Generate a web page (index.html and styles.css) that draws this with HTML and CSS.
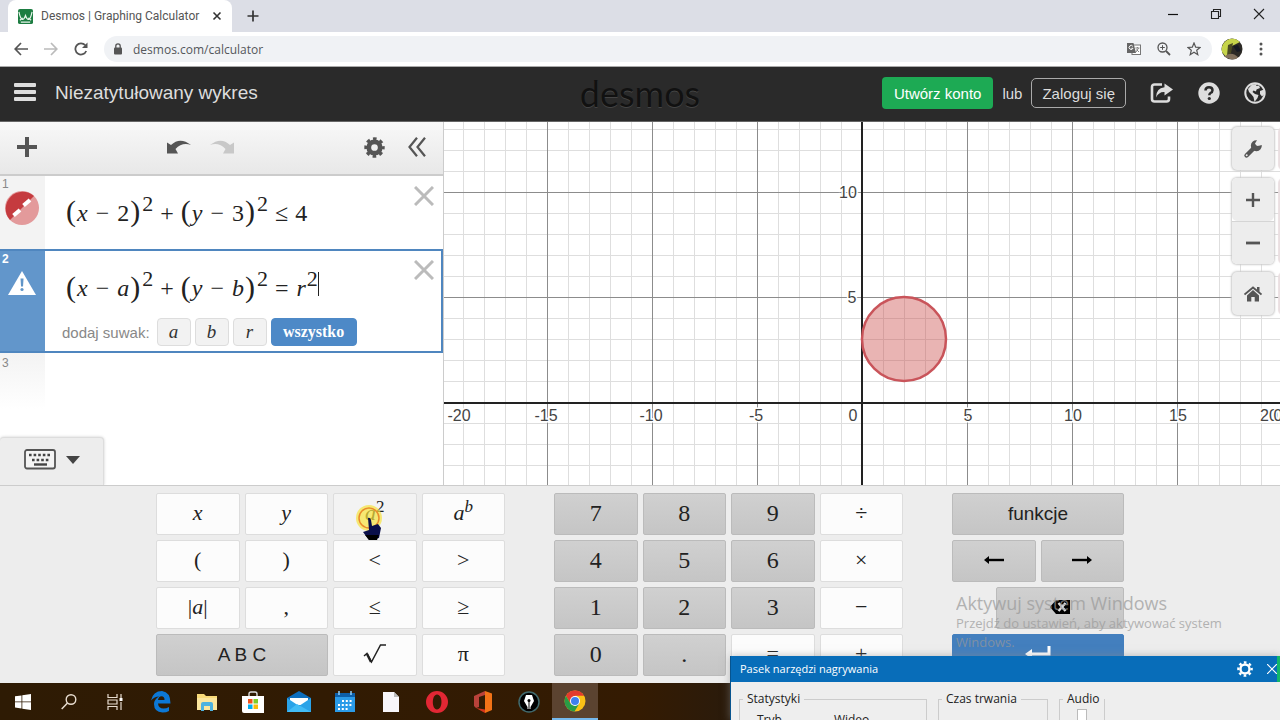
FILE: index.html
```html
<!DOCTYPE html>
<html lang="pl">
<head>
<meta charset="utf-8">
<title>Desmos | Graphing Calculator</title>
<link rel="stylesheet" href="styles.css">
</head>
<body>
<header class="browser">
  <div class="tabstrip">
    <div class="tab">
      <svg class="favicon" viewBox="0 0 16 16"><rect width="16" height="16" rx="2" fill="#1d7d42"/><path d="M1 3C3 13 6 13 8 7C10 13 13 13 15 3M2 12L5 9.500M14 12L11 9.500M3 14H13" fill="none" stroke="#e8f5ec" stroke-width="1.300"/></svg>
      <span class="tab-title">Desmos | Graphing Calculator</span>
      <button class="plain" aria-label="Zamknij kartę"><svg width="10" height="10" viewBox="0 0 10 10"><path d="M1.500 1.500L8.500 8.500M8.500 1.500L1.500 8.500" stroke="#333" stroke-width="1.600"/></svg></button>
    </div>
    <button class="plain newtab" aria-label="Nowa karta"><svg width="12" height="12" viewBox="0 0 12 12"><path d="M6 .5V11.500M.5 6H11.500" stroke="#333" stroke-width="1.700"/></svg></button>
    <div class="window-buttons">
      <button class="plain" aria-label="Minimalizuj"><svg width="12" height="12" viewBox="0 0 12 12"><path d="M1 6.500H11" stroke="#111" stroke-width="1.200"/></svg></button>
      <button class="plain" aria-label="Przywróć"><svg width="12" height="12" viewBox="0 0 12 12"><path d="M1.500 3.500H8.500V10.500H1.500ZM3.500 3V1.500H10.500V8.500H9" fill="none" stroke="#222" stroke-width="1.100"/></svg></button>
      <button class="plain" aria-label="Zamknij"><svg width="12" height="12" viewBox="0 0 12 12"><path d="M1 1L11 11M11 1L1 11" stroke="#222" stroke-width="1.100"/></svg></button>
    </div>
  </div>
  <div class="navbar">
    <button class="plain" aria-label="Wstecz"><svg width="14" height="14" viewBox="0 0 14 14"><path d="M14 7H1.500M7 1L1.200 7L7 13" fill="none" stroke="#555" stroke-width="1.700"/></svg></button>
    <button class="plain" aria-label="Dalej"><svg width="14" height="14" viewBox="0 0 14 14"><path d="M0 7H12.500M7 1L12.800 7L7 13" fill="none" stroke="#bbb" stroke-width="1.700"/></svg></button>
    <button class="plain" aria-label="Odśwież"><svg width="14" height="14" viewBox="0 0 14 14"><path d="M12.200 9A5.600 5.600 0 1 1 11.200 3.200" fill="none" stroke="#555" stroke-width="1.800"/><path d="M13.500 .5V6H8Z" fill="#555"/></svg></button>
    <div class="address">
      <svg width="8" height="12" viewBox="0 0 8 12"><rect y="4.500" width="8" height="7" rx="1" fill="#555"/><path d="M1.800 5V3A2.200 2.200 0 0 1 6.200 3V5" fill="none" stroke="#555" stroke-width="1.300"/></svg>
      <input class="url" type="text" aria-label="Adres" value="desmos.com/calculator">
      <button class="plain" aria-label="Przetłumacz"><svg width="14" height="14" viewBox="0 0 14 14"><rect x="5" y="3" width="8.500" height="9.500" fill="#fff" stroke="#777"/><path d="M0 1H6.500L9 11H0Z" fill="#666"/><path d="M5.800 4.300A2 2 0 1 0 6 6.300H4.300" fill="none" stroke="#fff"/><path d="M8.300 6H12.500M10.400 5V6M11.500 6.200L9 10M9.500 7.500L12 10" stroke="#777" fill="none" stroke-width=".9"/></svg></button>
      <button class="plain" aria-label="Powiększenie"><svg width="14" height="14" viewBox="0 0 14 14"><circle cx="5.500" cy="5.500" r="4.500" fill="none" stroke="#555" stroke-width="1.300"/><path d="M9 9L13 13" stroke="#555" stroke-width="1.800"/><path d="M5.500 3.200V7.800M3.200 5.500H7.800" stroke="#555"/></svg></button>
      <button class="plain" aria-label="Dodaj zakładkę"><svg width="14" height="14" viewBox="0 0 14 14"><path d="M7 1L8.700 5.200L13 5.500L9.700 8.300L10.800 12.700L7 10.300L3.200 12.700L4.300 8.300L1 5.500L5.300 5.200Z" fill="none" stroke="#555" stroke-width="1.200"/></svg></button>
    </div>
    <button class="plain" aria-label="Profil"><svg width="22" height="22" viewBox="0 0 22 22"><defs><clipPath id="avatar"><circle cx="11" cy="11" r="10.500"/></clipPath></defs><g clip-path="url(#avatar)"><rect width="22" height="22" fill="#2c2a26"/><path d="M0 13C1 4 6 0 15 0L19 4L11 8L6 20Z" fill="#c6d44b"/><path d="M7 7L12 5L10 15L6 18Z" fill="#4a4a22"/><path d="M12 8L17 7L20 13L16 14Z" fill="#161a24"/><path d="M3 19Q10 12 18 20L12 22Z" fill="#81705c"/></g></svg></button>
    <button class="plain" aria-label="Menu"><svg width="4" height="14" viewBox="0 0 4 14" fill="#555"><circle cx="2" cy="2" r="1.500"/><circle cx="2" cy="7" r="1.500"/><circle cx="2" cy="12" r="1.500"/></svg></button>
  </div>
</header>

<div class="site-header">
  <button class="plain" aria-label="Otwórz menu"><svg width="22" height="20" viewBox="0 0 22 20" fill="#ddd"><rect width="22" height="4" rx="1"/><rect y="7" width="22" height="4" rx="1"/><rect y="14" width="22" height="4" rx="1"/></svg></button>
  <h1 class="graph-title">Niezatytułowany wykres</h1>
  <div class="logo">desmos</div>
  <div class="account">
    <button class="signup">Utwórz konto</button>
    <span>lub</span>
    <button class="login">Zaloguj się</button>
  </div>
  <div class="header-icons">
    <button class="plain" aria-label="Udostępnij"><svg width="24" height="22" viewBox="0 0 24 22"><path d="M12 2.500H4.500Q2 2.500 2 5V17Q2 19.500 4.500 19.500H16.500Q19 19.500 19 17V14.500" fill="none" stroke="#ddd" stroke-width="2.600"/><path d="M14.500 1.500L23 7.500L14.500 13.500V10Q9 9.500 6 15.500Q6 6 14.500 5.200Z" fill="#ddd"/></svg></button>
    <button class="plain" aria-label="Pomoc"><svg width="22" height="22" viewBox="0 0 22 22"><circle cx="11" cy="11" r="10.700" fill="#ddd"/><path d="M7.500 8.500Q7.500 5.200 11 5.200Q14.500 5.200 14.500 8.200Q14.500 10 12.500 11Q11.300 11.700 11.300 13.300" fill="none" stroke="#2a2a2a" stroke-width="2.500"/><circle cx="11.300" cy="16.500" r="1.600" fill="#2a2a2a"/></svg></button>
    <button class="plain" aria-label="Język"><svg width="22" height="22" viewBox="0 0 22 22"><circle cx="11" cy="11" r="9.700" fill="none" stroke="#ddd" stroke-width="2"/><path d="M4 7L8 2.500L13 2L12 4L15 3.500L16 6L12.500 7.500L12 9.500L9.500 8.500L8.500 10L11 12L14.500 13L13.500 16L10.500 20L9.500 15L7.500 12.500L5 10Z" fill="#ddd"/><path d="M16 9L20 7.500L20.500 12L18 14.500L16 12Z" fill="#ddd"/></svg></button>
  </div>
</div>

<main class="workspace">
  <section class="expressions">
    <div class="list-toolbar">
      <button class="plain" aria-label="Dodaj element"><svg width="20" height="20" viewBox="0 0 20 20"><path d="M10 0V20M0 10H20" stroke="#555" stroke-width="4"/></svg></button>
      <div class="history">
        <button class="plain" aria-label="Cofnij"><svg width="24" height="14" viewBox="0 0 24 14"><path d="M0 2.500L4 5Q13-3.500 24 5Q15 2 8.500 9L11 13.500H0Z" fill="#555"/></svg></button>
        <button class="plain" aria-label="Ponów"><svg width="24" height="14" viewBox="0 0 24 14"><path d="M24 2.500L20 5Q11-3.500 0 5Q9 2 15.500 9L13 13.500H24Z" fill="#c8c8c8"/></svg></button>
      </div>
      <button class="plain" aria-label="Edytuj listę"><svg width="21" height="21" viewBox="0 0 22 22"><circle cx="11" cy="11" r="6" fill="none" stroke="#555" stroke-width="5"/><circle cx="11" cy="11" r="9" fill="none" stroke="#555" stroke-width="3.400" stroke-dasharray="3.700 3.370" stroke-dashoffset="1.850"/></svg></button>
      <button class="plain" aria-label="Ukryj listę"><svg width="18" height="20" viewBox="0 0 18 20"><path d="M9 .8L1.500 10L9 19.200M17 .8L9.500 10L17 19.200" fill="none" stroke="#555" stroke-width="2.200"/></svg></button>
    </div>

    <div class="row">
      <div class="gutter"><span class="num">1</span>
        <svg width="34" height="36" viewBox="0 0 34 36"><circle cx="17" cy="18" r="17" fill="#e39a9b"/><path d="M5 30A17 17 0 0 1 29 6Z" fill="#c53b3f"/><path d="M8.500 25.500L15 20M18.500 15.500L25 10" stroke="#fff" stroke-width="4"/></svg>
      </div>
      <div class="cell">
        <div class="math"><span class="par">(</span><i>x</i><b>−</b><span class="digit">2</span><span class="par">)</span><sup>2</sup><b>+</b><span class="par">(</span><i>y</i><b>−</b><span class="digit">3</span><span class="par">)</span><sup>2</sup><b>≤</b>4</div>
        <button class="plain remove" aria-label="Usuń"><svg width="20" height="20" viewBox="0 0 20 20"><path d="M1 1L19 19M19 1L1 19" stroke="#bbb" stroke-width="3"/></svg></button>
      </div>
    </div>

    <div class="row selected">
      <div class="gutter"><span class="num">2</span>
        <svg width="28" height="24" viewBox="0 0 28 24"><path d="M14 0L28 24H0Z" fill="#fff"/><path d="M12.500 7.500H15.500L15 15.500H13Z" fill="#6095c8"/><circle cx="14" cy="18.500" r="1.600" fill="#6095c8"/></svg>
      </div>
      <div class="cell">
        <div class="math"><span class="par">(</span><i>x</i><b>−</b><i>a</i><span class="par">)</span><sup>2</sup><b>+</b><span class="par">(</span><i>y</i><b>−</b><i>b</i><span class="par">)</span><sup>2</sup><b>=</b><i>r</i><sup class="caret">2</sup></div>
        <div class="sliders"><span>dodaj suwak:</span><button>a</button><button>b</button><button>r</button><button class="all">wszystko</button></div>
        <button class="plain remove" aria-label="Usuń"><svg width="20" height="20" viewBox="0 0 20 20"><path d="M1 1L19 19M19 1L1 19" stroke="#bbb" stroke-width="3"/></svg></button>
      </div>
    </div>

    <div class="row next"><div class="gutter"><span class="num">3</span></div><div class="cell"></div></div>

    <button class="keypad-toggle" aria-label="Ukryj klawiaturę">
      <svg width="32" height="21" viewBox="0 0 32 21"><rect x="1" y="1" width="30" height="18.500" rx="2" fill="#f4f4f4" stroke="#555" stroke-width="1.800"/><path d="M5 6H28M8 11H26" stroke="#444" stroke-width="2.600" stroke-dasharray="2.600 2"/><path d="M10 15.500H23" stroke="#444" stroke-width="2.400"/></svg>
      <svg width="14" height="8" viewBox="0 0 14 8"><path d="M0 0H14L7 8Z" fill="#444"/></svg>
    </button>
  </section>

  <section class="graph">
    <svg class="plot" width="100%" height="100%">
      <defs>
        <pattern id="minor" width="21" height="21" patternUnits="userSpaceOnUse"><path d="M0 .5H21M.5 0V21" stroke="#dedede" fill="none"/></pattern>
        <pattern id="major" width="105" height="105" patternUnits="userSpaceOnUse"><path d="M0 .5H105M.5 0V105" stroke="#8c8c8c" fill="none"/></pattern>
      </defs>
      <svg x="50%" y="280" overflow="visible">
        <rect x="-2100" y="-2100" width="4200" height="4200" fill="url(#minor)"/>
        <rect x="-2100" y="-2100" width="4200" height="4200" fill="url(#major)"/>
        <path d="M-2100 1H2100M0 -2100V2100" stroke="#222" stroke-width="2"/>
        <circle cx="42" cy="-63" r="42" fill="#c74440" fill-opacity=".4" stroke="#c9545a" stroke-width="2.500"/>
        <g class="ticks">
          <text x="-403" y="19">-20</text><text x="-316" y="19">-15</text><text x="-211" y="19">-10</text><text x="-106" y="19">-5</text><text x="-9" y="19">0</text>
          <text x="106" y="19">5</text><text x="211" y="19">10</text><text x="316" y="19">15</text><text x="407" y="19">20</text><text x="416" y="19">0</text>
          <text x="-14" y="-204">10</text><text x="-10" y="-99">5</text>
        </g>
      </svg>
    </svg>
    <div class="graph-controls">
      <button aria-label="Ustawienia wykresu"><svg width="20" height="20" viewBox="0 0 20 20"><path d="M3.500 16.500L12 8" stroke="#555" stroke-width="4.400" stroke-linecap="round"/><path d="M18.800 6A5.500 5.500 0 1 1 14 1.200L12 4.500L13.500 7L16 6.800Z" fill="#555"/><circle cx="3.700" cy="16.300" r="1" fill="#eee"/></svg></button>
      <div class="zoom">
        <button aria-label="Powiększ"><svg width="14" height="14" viewBox="0 0 14 14"><path d="M7 0V14M0 7H14" stroke="#555" stroke-width="2.400"/></svg></button>
        <button aria-label="Pomniejsz"><svg width="14" height="14" viewBox="0 0 14 14"><path d="M0 7H14" stroke="#555" stroke-width="2.800"/></svg></button>
      </div>
      <button aria-label="Widok domyślny"><svg width="18" height="16" viewBox="0 0 18 16"><path d="M.5 8.500L9 1.500L17.500 8.500" fill="none" stroke="#555" stroke-width="1.800"/><path d="M13 1H15.500V6L13 4Z" fill="#555"/><path d="M9 4L15 9.500V15.500H10.700V11H7.300V15.500H3V9.500Z" fill="#555"/></svg></button>
    </div>
  </section>
</main>

<section class="keypad">
  <div class="keys four">
    <button><i>x</i></button><button><i>y</i></button>
    <button class="hover"><span><i>a</i><sup>2</sup></span>
      <svg class="pointer" width="30" height="38" viewBox="0 0 30 38"><circle cx="14" cy="14" r="13" fill="#f7e33c" fill-opacity=".7"/><circle cx="14" cy="14" r="10" fill="none" stroke="#e98b2a" stroke-width="1.500"/><path d="M13 14Q15 13 16 16L17 22L23 20L26 24L24 34L14 36L8 28L14 26Z" fill="#0a0f4a"/><path d="M10 31H24L22 36H14Z" fill="#000"/></svg>
    </button>
    <button><span><i>a</i><sup><i>b</i></sup></span></button>
    <button>(</button><button>)</button><button>&lt;</button><button>&gt;</button>
    <button><span>|<i>a</i>|</span></button><button>,</button><button>≤</button><button>≥</button>
    <button class="dark sans wide">A B C</button><button aria-label="pierwiastek"><svg width="23" height="20" viewBox="0 0 23 20"><path d="M1 12L4 9.500L8.500 18L17.500 1H23" fill="none" stroke="#222" stroke-width="1.500"/><path d="M4 10L8 18" stroke="#222" stroke-width="2.400"/></svg></button><button>π</button>
  </div>
  <div class="keys four">
    <button class="dark">7</button><button class="dark">8</button><button class="dark">9</button><button>÷</button>
    <button class="dark">4</button><button class="dark">5</button><button class="dark">6</button><button>×</button>
    <button class="dark">1</button><button class="dark">2</button><button class="dark">3</button><button>−</button>
    <button class="dark">0</button><button class="dark">.</button><button>=</button><button>+</button>
  </div>
  <div class="keys two">
    <button class="dark sans wide">funkcje</button>
    <button class="dark" aria-label="W lewo"><svg width="20" height="8" viewBox="0 0 20 8"><path d="M0 4L5 0V8Z"/><path d="M4 4H20" stroke="#000" stroke-width="2.400"/></svg></button>
    <button class="dark" aria-label="W prawo"><svg width="20" height="8" viewBox="0 0 20 8"><path d="M20 4L15 0V8Z"/><path d="M0 4H16" stroke="#000" stroke-width="2.400"/></svg></button>
    <button class="dark wide backspace" aria-label="Usuń"><svg width="20" height="14" viewBox="0 0 20 14"><path d="M0 7L6 0H20V14H6Z"/><path d="M8.500 3L15.500 11M15.500 3L8.500 11" stroke="#ddd" stroke-width="2.400"/></svg></button>
    <button class="enter wide" aria-label="Enter"><svg width="26" height="16" viewBox="0 0 26 16"><path d="M24 0V8H5" fill="none" stroke="#fff" stroke-width="3"/><path d="M0 8L7 3V13Z" fill="#fff"/></svg></button>
  </div>
</section>

<nav class="taskbar">
  <button class="plain" aria-label="Start"><svg width="16" height="16" viewBox="0 0 16 16" fill="#fff"><path d="M0 2.300L6.500 1.400V7.500H0ZM7.300 1.300L16 0V7.500H7.300ZM0 8.300H6.500V14.500L0 13.600ZM7.300 8.300H16V16L7.300 14.700Z"/></svg></button>
  <button class="plain" aria-label="Szukaj"><svg width="16" height="16" viewBox="0 0 16 16"><circle cx="10" cy="5.500" r="4.800" fill="none" stroke="#e8ddd0" stroke-width="1.400"/><path d="M6.500 9L.7 15" stroke="#e8ddd0" stroke-width="1.500"/></svg></button>
  <button class="plain" aria-label="Widok zadań"><svg width="16" height="16" viewBox="0 0 16 16"><path d="M1 0V3.500H10V0M1 16V12.500H10V16M1 6H10V10H1ZM14 0V4M14 8V16" fill="none" stroke="#e8ddd0" stroke-width="1.200"/><rect x="12.500" y="4" width="3" height="3" fill="#fff"/></svg></button>
  <button class="plain" aria-label="Edge"><svg width="20" height="22" viewBox="0 0 20 22"><path d="M0 9.500Q2 0 11 0Q19.500 1 19.500 12.500H7Q7.500 17.500 12.500 17.500Q15.500 17.500 18 16V20Q15.500 21.500 11.500 21.500Q3 21 3 13Q3 8.500 8 5.500Q3.500 5.500 0 9.500ZM7 9H13.500Q13.500 5.300 10.500 5.300Q7.500 5.500 7 9Z" fill="#0c78d6"/></svg></button>
  <button class="plain" aria-label="Eksplorator plików"><svg width="22" height="18" viewBox="0 0 22 18"><path d="M1 1H8L10 3H21V17H1Z" fill="#f9da78"/><path d="M1 5H21V17H1Z" fill="#fce69d"/><path d="M5 18V11Q5 9 7 9H15Q17 9 17 11V18H14V13H8V18Z" fill="#4db2df"/></svg></button>
  <button class="plain" aria-label="Sklep"><svg width="22" height="22" viewBox="0 0 22 22"><path d="M7 6V3Q7 1 9 1H13Q15 1 15 3V6" fill="none" stroke="#ddd" stroke-width="1.400"/><path d="M0 5H22V22H2Q0 22 0 20Z" fill="#fff"/><path d="M6 8H10.500V12.500H6Z" fill="#f1511b"/><path d="M11.500 8H16V12.500H11.500Z" fill="#80cc28"/><path d="M6 13.500H10.500V18H6Z" fill="#00adef"/><path d="M11.500 13.500H16V18H11.500Z" fill="#fbbc09"/></svg></button>
  <button class="plain" aria-label="Poczta"><svg width="24" height="22" viewBox="0 0 24 22"><path d="M0 7L12 0L24 7V21H0Z" fill="#0d6ebd"/><path d="M3 7H21V14H3Z" fill="#fff"/><path d="M0 7L12 15L24 7V21H0Z" fill="#2aa3e8"/><path d="M0 21L10 13L24 21Z" fill="#42bcf5"/></svg></button>
  <button class="plain" aria-label="Kalendarz"><svg width="22" height="22" viewBox="0 0 22 22"><path d="M1 2H21V21H1Z" fill="#2b9be8"/><path d="M1 2H21V6H1Z" fill="#0d5fa9"/><path d="M5 0V4M17 0V4" stroke="#8fd0fb" stroke-width="1.500"/><path d="M8 10H19M4 14H19M4 18H15" stroke="#fff" stroke-width="2" stroke-dasharray="2 1.800"/></svg></button>
  <button class="plain" aria-label="Dokument"><svg width="16" height="20" viewBox="0 0 16 20"><path d="M0 0H11L16 5V20H0Z" fill="#f8f6fa"/><path d="M11 0V5H16Z" fill="#bbb"/></svg></button>
  <button class="plain" aria-label="Opera"><svg width="22" height="22" viewBox="0 0 22 22"><path d="M11 0A11 11 0 1 0 11 22A11 11 0 1 0 11 0ZM11 3.500C17 3.500 17 18.500 11 18.500C5.500 18.500 5.500 3.500 11 3.500Z" fill="#e22734" fill-rule="evenodd"/></svg></button>
  <button class="plain" aria-label="Office"><svg width="18" height="22" viewBox="0 0 18 22"><path d="M0 5L11 0V4L5 6V16L2 17L0 15Z" fill="#b9423a"/><path d="M11 0L18 2.500V19L11 22Z" fill="#f27317"/><path d="M2 17L11 18.500V22Z" fill="#d5351b"/></svg></button>
  <button class="plain" aria-label="Pióro"><svg width="22" height="22" viewBox="0 0 22 22"><circle cx="11" cy="11" r="10" fill="#000" stroke="#41696c" stroke-width="1.500"/><path d="M8 4H14L16 10L12.500 16V18H9.500V16L6 10Z" fill="#fff"/><path d="M11 9V18" stroke="#000"/><circle cx="11" cy="9.500" r="1.500"/></svg></button>
  <button class="plain active" aria-label="Chrome"><svg width="22" height="22" viewBox="0 0 22 22"><circle cx="11" cy="11" r="10.500" fill="#fbc116"/><path d="M1.900 5.800A10.500 10.500 0 0 1 20.100 5.800H11L6.500 13.500Z" fill="#e33b2e"/><path d="M1.900 5.800A10.500 10.500 0 0 0 10.500 21.500L15.300 13.500L6.500 13.500Z" fill="#2a9c46"/><circle cx="11" cy="11" r="5" fill="#fff"/><circle cx="11" cy="11" r="4" fill="#3f7fed"/></svg></button>
</nav>

<aside class="watermark"><p class="wm-title">Aktywuj system Windows</p><p>Przejdź do ustawień, aby aktywować system Windows.</p></aside>

<section class="recorder">
  <div class="rec-bar"><span class="rec-title">Pasek narzędzi nagrywania</span>
    <button class="plain" aria-label="Ustawienia"><svg width="16" height="16" viewBox="0 0 16 16"><circle cx="8" cy="8" r="4.500" fill="none" stroke="#fff" stroke-width="2.400"/><circle cx="8" cy="8" r="6.600" fill="none" stroke="#fff" stroke-width="2.400" stroke-dasharray="2.600 2.580" stroke-dashoffset="1.300"/></svg></button>
    <button class="plain" aria-label="Zamknij"><svg width="10" height="10" viewBox="0 0 10 10"><path d="M0 0L10 10M10 0L0 10" stroke="#fff" stroke-width="1.200"/></svg></button>
    <span class="edge"></span>
  </div>
  <div class="rec-body">
    <fieldset class="stats"><legend>Statystyki</legend><span>Tryb</span><span>Wideo</span></fieldset>
    <fieldset class="time"><legend>Czas trwania</legend></fieldset>
    <fieldset class="audio"><legend>Audio</legend><div class="meter"></div></fieldset>
  </div>
</section>
</body>
</html>
```
FILE: styles.css
```css
* { box-sizing: border-box; }
body {
  margin: 0;
  height: 100vh;
  display: flex;
  flex-direction: column;
  overflow: hidden;
  position: relative;
  font-family: "Liberation Sans", Arial, sans-serif;
  background: #fff;
}
button { font: inherit; color: inherit; padding: 0; }
svg { display: block; flex: none; }
.plain { border: 0; background: none; display: flex; align-items: center; justify-content: center; }

/* Browser frame */
.browser { font-family: "Open Sans", "Noto Sans", sans-serif; }
.tabstrip { display: flex; align-items: center; height: 32px; background: #dcdee6; padding-left: 8px; }
.tab { display: flex; align-items: center; gap: 8px; width: 224px; height: 32px; padding: 0 10px; background: #fff; border-radius: 8px 8px 0 0; }
.favicon { width: 15px; height: 15px; }
.tab-title { flex: 1; font: 12px/16px Roboto, sans-serif; color: #555; white-space: nowrap; }
.newtab { margin-left: 15px; }
.window-buttons { margin-left: auto; display: flex; gap: 31px; padding: 0 15px 4px 0; }
.navbar { display: flex; align-items: center; gap: 16px; height: 35px; padding: 0 17px 0 14px; background: #fff; border-bottom: 1px solid #aaa; }
.address { flex: 1; display: flex; align-items: center; gap: 16px; height: 26px; padding: 0 11px 0 10px; border-radius: 13px; background: #f0f2f5; margin-right: -7px; }
.url { flex: 1; min-width: 0; border: 0; padding: 0; margin-left: -5px; background: none; font: 12px "Open Sans", "Noto Sans", sans-serif; color: #54575b; }

/* Site header */
.site-header { display: flex; align-items: center; height: 55px; padding: 0 14px 2px; background: #2a2a2a; color: #ddd; position: relative; border-bottom: 1px solid #666; }
.graph-title { flex: 1; margin: 0 0 0 19px; font-size: 19px; line-height: 24px; font-weight: 400; }
.logo { position: absolute; left: 0; right: 0; text-align: center; font: 36px/50px Lato, sans-serif; color: #111; text-shadow: 0 1px 0 #444; pointer-events: none; }
.account { display: flex; align-items: center; gap: 9px; font-size: 15px; }
.signup { height: 32px; padding: 0 12px; border: 0; border-radius: 4px; background: #1daa54; color: #fff; }
.login { height: 30px; padding: 0 10px; border: 1px solid #aaa; border-radius: 5px; background: none; }
.header-icons { display: flex; gap: 24px; margin-left: 24px; }

/* Expression list */
.workspace { flex: 1; min-height: 0; display: flex; }
.expressions { width: 444px; flex: none; position: relative; border-right: 1px solid #ccc; overflow: hidden; }
.list-toolbar { display: flex; align-items: center; height: 54px; padding: 0 17px 2px; background: linear-gradient(#f8f8f8, #e8e8e8); border-bottom: 2px solid #ccc; }
.list-toolbar > :nth-child(3) { margin-right: 23px; }
.history { flex: 1; display: flex; gap: 19px; justify-content: center; }
.row { display: flex; height: 73px; }
.gutter { width: 45px; flex: none; padding: 2px; background: #f3f3f3; display: flex; flex-direction: column; align-items: flex-start; color: #888; }
.gutter svg { margin-left: 3px; }
.num { font-size: 12px; line-height: 12px; }
.cell { flex: 1; position: relative; padding-left: 21px; }
.math { display: flex; align-items: center; height: 73px; font: 24px/30px "Liberation Serif", "Times New Roman", serif; color: #222; }
.math i { margin: 0 1px; }
.math b { font-weight: 400; margin: 0 7px; }
.digit { margin: 0 1px; }
.par { font-size: 30px; padding-bottom: 3px; }
.math sup { font-size: 22px; line-height: 20px; padding-bottom: 18px; margin-left: 2px; }
.math .caret { margin-left: 0; padding-bottom: 0; height: 24px; margin-bottom: 8px; border-right: 1px solid #222; line-height: 14px; }
.remove { position: absolute; right: 9px; top: 10px; }
.selected { height: 104px; border: 2px solid #4f86bf; border-left: 0; }
.selected .gutter { background: #6296cb; color: #fff; font-weight: 700; gap: 6px; }
.selected .gutter svg { margin-left: 6px; }
.selected .remove { right: 7px; top: 9px; }
.selected .math { height: 74px; }
.sliders { display: flex; gap: 4px; align-items: center; height: 28px; margin: -7px 0 0 -4px; font-size: 15px; color: #888; }
.sliders span { margin-right: 3px; }
.sliders button { width: 34px; height: 28px; border: 1px solid #ddd; border-radius: 4px; background: #f2f2f2; font: italic 19px/20px "Liberation Serif", serif; color: #333; }
.sliders .all { width: 86px; background: #4d89c7; border-color: #4d89c7; color: #fff; font: bold 16px/20px "Liberation Serif", serif; }
.next { height: 56px; }
.next .gutter { background: linear-gradient(#f3f3f3, #fff); padding-top: 4px; }
.keypad-toggle { position: absolute; left: 0; bottom: 0; width: 104px; height: 48px; display: flex; align-items: center; justify-content: center; gap: 10px; padding: 0 0 4px; border: 1px solid #ddd; border-bottom: 0; border-left: 0; border-radius: 4px 4px 0 0; background: #ededed; box-shadow: 0 0 3px #ccc; }

/* Graph */
.graph { flex: 1; position: relative; min-width: 0; overflow: hidden; }
.ticks text { font-size: 16px; fill: #444; text-anchor: middle; stroke: #fff; stroke-width: 3px; paint-order: stroke; }
.graph-controls { position: absolute; top: 5px; right: 6px; width: 42px; display: flex; flex-direction: column; gap: 8px; }
.graph-controls button { display: flex; align-items: center; justify-content: center; width: 42px; height: 43px; border: 0; border-radius: 5px; background: #ededed; }
.graph-controls > * { box-shadow: 0 0 2px 1px #ccc, 46px 0 1px #eadfe1; border-radius: 5px; }
.zoom button + button { border-top: 1px solid #d5d5d5; border-radius: 0 0 5px 5px; }

/* Keypad */
.keypad { flex: none; display: flex; justify-content: center; gap: 49px; height: 198px; padding-top: 7px; background: #ededed; border-top: 1px solid #ccc; font: 22px "Liberation Serif", serif; color: #222; }
.keys { display: grid; gap: 5px; grid-auto-rows: 42px; }
.four { width: 349px; grid-template-columns: repeat(4, 1fr); }
.two { width: 172px; grid-template-columns: repeat(2, 1fr); }
.keys button { position: relative; display: flex; align-items: center; justify-content: center; padding-bottom: 2px; border: 1px solid #ddd; border-radius: 2px; background: #fcfcfc; }
.keys sup { font-size: 17px; line-height: 0; }
.keys .hover { background: #f3f3f3; }
.keys .dark { background: linear-gradient(#d0d0d0, #c5c5c5); border-color: #bbb; font-size: 24px; }
.keys .sans { font: 19px "Liberation Sans", sans-serif; padding-bottom: 0; }
.keys .wide { grid-column: span 2; }
.keys .backspace { margin-left: 44px; }
.keys .enter { background: #437fbe; border-color: #437fbe; }
.pointer { position: absolute; left: 21px; top: 10px; }

/* Desktop */
.taskbar { flex: none; display: flex; height: 37px; background: linear-gradient(90deg, #2e1b04, #341b02 50%, #261b10 60%); }
.taskbar button { width: 46px; height: 37px; }
.taskbar .active { background: #5b4330; border-bottom: 2px solid #76b9ed; }
.watermark { position: absolute; left: 956px; right: 40px; top: 592px; font-family: "Open Sans", "Noto Sans", sans-serif; font-size: 13px; line-height: 19px; color: #999; opacity: .7; pointer-events: none; }
.watermark p { margin: 0; }
.watermark .wm-title { font-size: 18px; line-height: 22px; }
.recorder { position: absolute; left: 730px; right: 0; bottom: 0; height: 64px; overflow: hidden; background: #eee; border-left: 1px solid #07548f; font: 12px/14px "Open Sans", "Noto Sans", sans-serif; color: #222; box-shadow: 0 0 8px #8888; }
.rec-bar { display: flex; align-items: center; gap: 14px; height: 26px; padding-left: 9px; background: #086db9; color: #fff; }
.rec-title { flex: 1; font-size: 11px; }
.edge { width: 3px; height: 26px; margin-left: -14px; background: #12b76a; }
.rec-body { display: flex; gap: 11px; padding: 10px 8px; }
.rec-body fieldset { height: 40px; margin: 0; padding: 7px 17px; border: 1px solid #ccc; display: flex; font-size: 12px; }
.rec-body legend { padding: 0 4px; margin-left: -14px; }
.rec-body .stats { width: 188px; gap: 52px; }
.rec-body .time { width: 110px; }
.rec-body .audio { width: 46px; min-width: 0; padding-right: 0; }
.meter { width: 10px; height: 20px; flex: none; margin-top: -4px; border: 1px solid #bbb; background: #fff; }
```
